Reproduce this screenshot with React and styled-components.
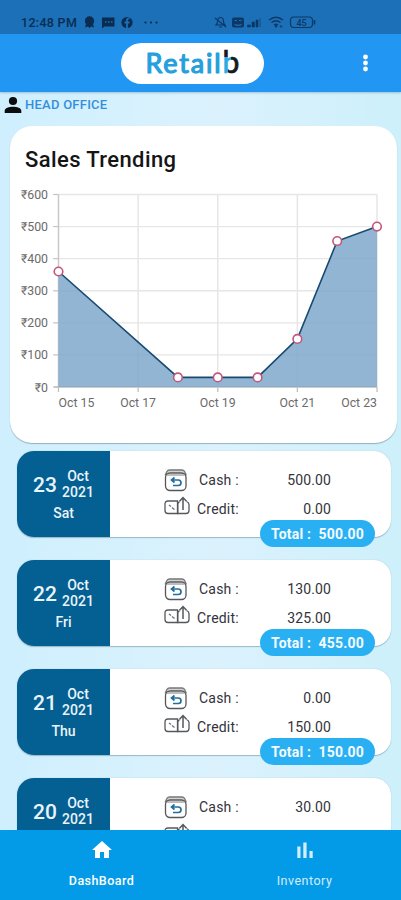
import React from "react";
import styled, { createGlobalStyle } from "styled-components";

const GlobalStyle = createGlobalStyle`
  * { box-sizing: border-box; }
  body { margin: 0; font-family: Roboto, "Noto Sans", sans-serif; background: #d5f0fd; }
  svg { display: block; flex: none; }
`;

const Screen = styled.div`
  width: 401px;
  height: 900px;
  overflow: hidden;
  display: flex;
  flex-direction: column;
  background: linear-gradient(90deg, #cfeffe 0%, #dbf2fd 55%, #cdf0fb 100%);
`;

const StatusBar = styled.div`
  flex: none;
  height: 34px;
  padding: 11px 0 0 21px;
  display: flex;
  align-items: flex-start;
  background: #1b70b8;
  color: #0a2c50;
`;

const Clock = styled.span`
  width: 62px;
  font-size: 12.5px;
  line-height: 23px;
  letter-spacing: 0.3px;
  font-weight: 500;
  white-space: nowrap;
`;

const StatusIcons = styled.div`
  display: flex;
  margin-left: ${(p) => p.$gap || 0}px;
`;

const AppBar = styled.header`
  flex: none;
  height: 58px;
  padding: 0 26px 0 121px;
  display: flex;
  align-items: center;
  justify-content: space-between;
  background: #2196f3;
  box-shadow: 0 1px 2px rgba(60, 110, 130, 0.35);
`;

const LogoPill = styled.div`
  width: 143px;
  height: 41px;
  margin-top: 1px;
  border-radius: 21px;
  background: #fff;
`;

const Content = styled.main`
  flex: 1;
  min-height: 0;
  overflow: hidden;
`;

const Branch = styled.div`
  height: 34px;
  padding: 0 0 9px 4px;
  display: flex;
  align-items: center;
  gap: 3px;
  color: #348fdb;
  font-size: 13px;
  letter-spacing: 0.25px;
  font-weight: 500;
`;

const ChartCard = styled.section`
  width: 387px;
  height: 317px;
  margin-left: 10px;
  border-radius: 22px;
  background: #fff;
  box-shadow: 0 1px 1px rgba(70, 100, 110, 0.45);
`;

const ChartTitle = styled.h1`
  margin: 0;
  height: 54px;
  padding: 20px 0 0 15px;
  font-size: 22px;
  line-height: 28px;
  font-weight: 500;
  letter-spacing: 0.4px;
  color: #151515;
`;

const DayList = styled.div`
  padding: 8px 10px 0 17px;
  display: flex;
  flex-direction: column;
  gap: 23px;
`;

const DayCard = styled.article`
  position: relative;
  height: 86px;
  display: flex;
  border-radius: 17px;
  background: #fff;
  box-shadow: 0 0.5px 1px rgba(90, 130, 140, 0.5);
`;

const DatePanel = styled.div`
  width: 93px;
  padding-top: 16px;
  border-radius: 17px 0 0 17px;
  background: #045f92;
  color: #e9f4fa;
  font-weight: 500;
`;

const DateTop = styled.div`
  display: flex;
  align-items: center;
  padding-left: 16px;
  height: 34px;
`;

const DayNumber = styled.span`
  width: 29px;
  padding-top: 1px;
  font-size: 21px;
  line-height: 24px;
`;

const MonthYear = styled.span`
  width: 32px;
  font-size: 14px;
  line-height: 16.5px;
  text-align: center;
`;

const Weekday = styled.div`
  height: 20px;
  padding-top: 2px;
  text-align: center;
  font-size: 14px;
  line-height: 20px;
`;

const Amounts = styled.div`
  padding: 14px 0 0 54px;
`;

const AmountRow = styled.div`
  display: grid;
  grid-template-columns: 33px 52px 82px;
  align-items: center;
  height: 29px;
  font-size: 14px;
  color: #33333b;
`;

const IconSlot = styled.span`
  display: flex;
  padding-bottom: ${(p) => p.$lift || 0}px;
`;

const AmountLabel = styled.span`
  padding-left: ${(p) => p.$indent || 0}px;
  letter-spacing: 0.2px;
  white-space: nowrap;
`;

const AmountValue = styled.span`
  text-align: right;
  letter-spacing: 0.1px;
`;

const TotalBadge = styled.div`
  position: absolute;
  right: 16px;
  bottom: -10px;
  width: 115px;
  height: 27px;
  padding: 0 11px;
  display: flex;
  align-items: center;
  justify-content: space-between;
  border-radius: 14px;
  background: #29b0f3;
  color: #f5fbff;
  font-size: 14px;
  font-weight: 700;
  letter-spacing: 0.2px;
`;

const BottomNav = styled.nav`
  flex: none;
  height: 70px;
  display: grid;
  grid-template-columns: 203px 203px;
  background: #039be8;
`;

const NavItem = styled.div`
  display: flex;
  flex-direction: column;
  align-items: center;
  padding-top: 8px;
  gap: 10px;
  color: ${(p) => (p.$active ? "#fff" : "#d3edfb")};
  font-size: 12.5px;
  line-height: 18px;
  font-weight: ${(p) => (p.$active ? 500 : 400)};
  letter-spacing: ${(p) => (p.$active ? 0.45 : 0.5)}px;
`;

const NotificationGlyphs = () => (
  <svg width="80" height="23" viewBox="83 11 80 23" fill="#0a2c50">
    <circle cx="89.500" cy="21" r="4.700" />
    <path d="M86 24h7l1 3.500-3-1-1.500 1.500-1.500-1.500-3 1z" />
    <path d="M102 17.500h12.500v9h-10l-2.500 2z" />
    <path d="M105 22h1.500m1.500 0h1.500m1.500 0h1.500" stroke="#1b70b8" strokeWidth="1.500" />
    <circle cx="127" cy="22.500" r="5.600" />
    <path d="M127 28v-8q0-1.800 2.500-1.500M124.500 22.500h5" stroke="#1b70b8" strokeWidth="1.800" fill="none" />
    <circle cx="145.500" cy="22.500" r="1.100" />
    <circle cx="151" cy="22.500" r="1.100" />
    <circle cx="156.500" cy="22.500" r="1.100" />
  </svg>
);

const SystemGlyphs = () => (
  <svg width="104" height="23" viewBox="213 11 104 23" fill="none" stroke="#0d3866" strokeWidth="1.200">
    <path d="M216 25q1.500-1.500 1.500-3.500 0-4 3-4t3 4q0 2 1.500 3.500zM219 27h3M215 18l11 9" />
    <rect x="232" y="17.500" width="12" height="10" rx="2" fill="#0d3866" stroke="none" />
    <path d="M234.500 20.500h2.500m2 0h2.500M234.500 24.500q3.500 1.800 7 0" stroke="#1b70b8" />
    <path d="M247.500 27h3v-2h-3zM252 27v-5h2.500v5zM256 27v-7h2v7zM260 27v-9" fill="#0d3866" strokeWidth=".6" />
    <path d="M269 20q7-5.500 14 0M271.500 22.500q4.500-3.500 9 0M274 25q2-1.500 4 0" strokeWidth="1.400" />
    <circle cx="276" cy="26.300" r="1.200" fill="#0d3866" stroke="none" />
    <path d="M281 25v3m-1.500-1.500h3" strokeWidth=".7" />
    <rect x="290.500" y="17" width="22" height="10.500" rx="3.500" />
    <path d="M314.500 20v4.500" strokeWidth="1.600" />
    <text x="296.500" y="25.700" fill="#0d3866" stroke="none" fontFamily="Roboto" fontWeight="500" fontSize="9">45</text>
  </svg>
);

const Logo = () => (
  <svg width="143" height="41" viewBox="121 44 143 41">
    <defs>
      <pattern id="markFill" patternUnits="userSpaceOnUse" x="220" y="44" width="30" height="41">
        <rect width="30" height="41" fill="#171a1c" />
        <path d="M0 14h11v7H8v20H0z" fill="#29abe2" />
      </pattern>
    </defs>
    <text x="145.500" y="74" fill="#259fdd" stroke="#259fdd" strokeWidth="1.200" strokeLinejoin="round" fontFamily="Lato" fontWeight="400" fontSize="27" textLength="75" lengthAdjust="spacing">Retail</text>
    <text x="222.500" y="74" fill="url(#markFill)" stroke="url(#markFill)" strokeWidth=".7" fontFamily="Lato" fontWeight="400" fontSize="30">b</text>
  </svg>
);

const MoreIcon = () => (
  <svg width="20" height="24" viewBox="0 0 20 24" fill="#fff">
    <circle cx="10.500" cy="6" r="2.400" />
    <circle cx="10.500" cy="12" r="2.400" />
    <circle cx="10.500" cy="18" r="2.400" />
  </svg>
);

const PersonIcon = () => (
  <svg width="18" height="18" viewBox="0 0 18 18" fill="#0b0d0f">
    <circle cx="9" cy="5" r="4.100" />
    <path d="M.7 17v-2.200C.7 12 5 10.700 9 10.700s8.300 1.300 8.300 4.100V17z" />
  </svg>
);

const CashIcon = () => (
  <svg width="24" height="24" viewBox="0 0 24 24" fill="none" stroke="#55585b" strokeWidth="1.300">
    <path d="M1.500 6.500L3 3.300Q3.800 2 5.500 2H18q1.700 0 2.500 1.300L22 6.500z" fill="#d2d4d5" stroke="#777" />
    <rect x="1.500" y="5" width="20.500" height="17.500" rx="4.500" fill="#fff" />
    <path d="M3 7h17.500" stroke="#999" />
    <path d="M10.500 9.500L7.500 12l3 2.500M7.800 12h6.500q2.700 0 2.700 2.700t-2.700 2.800H9" stroke="#206f9f" strokeWidth="1.700" />
  </svg>
);

const CreditIcon = () => (
  <svg width="26" height="20" viewBox="0 0 26 20" fill="none" stroke="#55585b" strokeWidth="1.300">
    <path d="M13.500 5H4Q1 5 1 8v6.500q0 3 3 3h9.500z" />
    <path d="M5 9l2 1.500m1 1l2.500 2" stroke="#667b88" strokeWidth="1.500" />
    <path d="M15.500 5.500L13.800 7.500V17.500H22q3 0 3-3V8.500q0-2-2.500-3" />
    <path d="M19 14V1.500M15.500 5.200L19 1.500 22.500 5.200" strokeWidth="1.500" />
  </svg>
);

const HomeIcon = () => (
  <svg width="24" height="24" viewBox="0 0 24 24" fill="#fff">
    <path d="M10 20v-6h4v6h5v-8h3L12 3 2 12h3v8z" />
  </svg>
);

const BarsIcon = () => (
  <svg width="24" height="24" viewBox="0 0 24 24" fill="#d3edfb">
    <path d="M4.300 8.500h3.200V20H4.300zM10.300 4.500h3.300V20h-3.300zM16.500 13h3.200v7h-3.200z" />
  </svg>
);

const plot = { left: 48.5, right: 367, top: 14.5, bottom: 207 };
const dayX = (day) => plot.left + ((day - 15) * (plot.right - plot.left)) / 8;
const valueY = (v) => plot.bottom - (v * (plot.bottom - plot.top)) / 600;
const sales = [[15, 360], [18, 30], [19, 30], [20, 30], [21, 150], [22, 455], [23, 500]];
const linePoints = sales.map(([d, v]) => `${dayX(d)},${valueY(v)}`).join(" ");

const SalesChart = () => (
  <svg width="387" height="240" viewBox="0 0 387 240" fontFamily="Roboto, sans-serif" fontSize="12.3" fill="#6b6b6b">
    {[0, 100, 200, 300, 400, 500, 600].map((v) => (
      <g key={v}>
        <path d={`M44 ${valueY(v)}H${plot.right}`} stroke={v ? "#e6e6e6" : "#bdbdbd"} strokeWidth="1.300" />
        <path d={`M43 ${valueY(v)}H${plot.left}`} stroke="#c4c4c4" />
        <text x="38" y={valueY(v) + 4.5} textAnchor="end">{`₹${v}`}</text>
      </g>
    ))}
    {[15, 17, 19, 21, 23].map((d) => (
      <g key={d}>
        <path d={`M${dayX(d)} ${plot.top}V${plot.bottom}`} stroke={d === 15 ? "#c8c8c8" : "#e6e6e6"} strokeWidth="1.500" />
        <path d={`M${dayX(d)} ${plot.bottom}v5`} stroke="#c0c0c0" strokeWidth="1.300" />
        <text x={dayX(d)} y="227" textAnchor={d === 15 ? "start" : d === 23 ? "end" : "middle"}>{`Oct ${d}`}</text>
      </g>
    ))}
    <polygon points={`${plot.left},${plot.bottom} ${linePoints} ${plot.right},${plot.bottom}`} fill="#7aa5ca" fillOpacity=".82" />
    <polyline points={linePoints} fill="none" stroke="#184a70" strokeWidth="1.600" />
    {sales.map(([d, v]) => (
      <circle key={d} cx={dayX(d)} cy={valueY(v)} r="4.300" fill="#fff" stroke="#c2577a" strokeWidth="1.600" />
    ))}
  </svg>
);

const days = [
  { day: 23, weekday: "Sat", cash: "500.00", credit: "0.00", total: "500.00" },
  { day: 22, weekday: "Fri", cash: "130.00", credit: "325.00", total: "455.00" },
  { day: 21, weekday: "Thu", cash: "0.00", credit: "150.00", total: "150.00" },
  { day: 20, weekday: "Wed", cash: "30.00", credit: "0.00", total: "30.00" },
];

const DayEntry = ({ entry }) => (
  <DayCard>
    <DatePanel>
      <DateTop>
        <DayNumber>{entry.day}</DayNumber>
        <MonthYear>Oct 2021</MonthYear>
      </DateTop>
      <Weekday>{entry.weekday}</Weekday>
    </DatePanel>
    <Amounts>
      <AmountRow>
        <IconSlot><CashIcon /></IconSlot>
        <AmountLabel $indent={2}>Cash :</AmountLabel>
        <AmountValue>{entry.cash}</AmountValue>
      </AmountRow>
      <AmountRow>
        <IconSlot $lift={6}><CreditIcon /></IconSlot>
        <AmountLabel>Credit:</AmountLabel>
        <AmountValue>{entry.credit}</AmountValue>
      </AmountRow>
    </Amounts>
    <TotalBadge>
      <span>Total :</span>
      <span>{entry.total}</span>
    </TotalBadge>
  </DayCard>
);

export default function App() {
  return (
    <Screen>
      <GlobalStyle />
      <StatusBar>
        <Clock>12:48 PM</Clock>
        <NotificationGlyphs />
        <StatusIcons $gap={50}>
          <SystemGlyphs />
        </StatusIcons>
      </StatusBar>
      <AppBar>
        <LogoPill><Logo /></LogoPill>
        <MoreIcon />
      </AppBar>
      <Content>
        <Branch><PersonIcon />HEAD OFFICE</Branch>
        <ChartCard>
          <ChartTitle>Sales Trending</ChartTitle>
          <SalesChart />
        </ChartCard>
        <DayList>
          {days.map((entry) => <DayEntry key={entry.day} entry={entry} />)}
        </DayList>
      </Content>
      <BottomNav>
        <NavItem $active><HomeIcon />DashBoard</NavItem>
        <NavItem><BarsIcon />Inventory</NavItem>
      </BottomNav>
    </Screen>
  );
}
